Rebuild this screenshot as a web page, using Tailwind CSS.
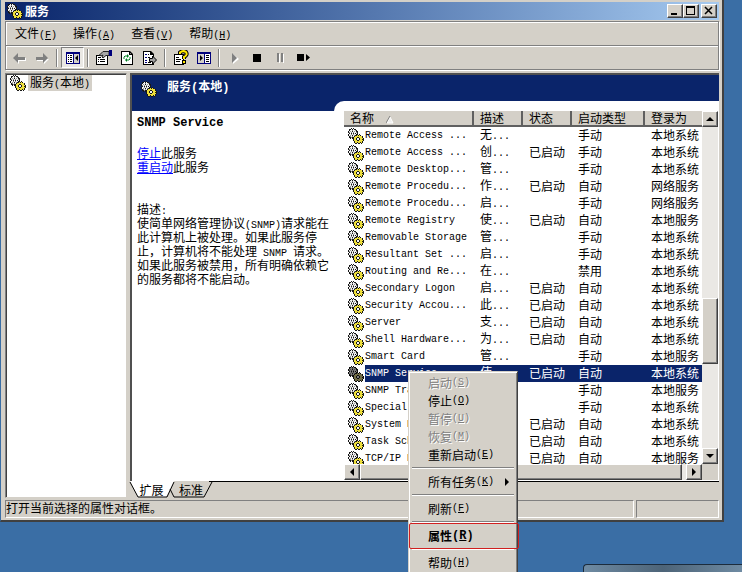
<!DOCTYPE html>
<html lang="zh-CN">
<head>
  <meta charset="UTF-8">
  <meta name="viewport" content="width=device-width, initial-scale=1.0">
  <title>服务</title>
  <script src="https://cdn.jsdelivr.net/npm/@tailwindcss/browser@4"></script>
</head>
<body class="h-screen overflow-hidden bg-[#3a6ea5] font-['Noto_Sans_CJK_SC',sans-serif] text-[12px] leading-[14px] text-black cursor-default select-none">

<!-- shared icons, gears is filled in by the script below -->
<svg class="hidden" xmlns="http://www.w3.org/2000/svg">
  <symbol id="gears" viewBox="0 0 16 16" shape-rendering="crispEdges"></symbol>
</svg>

<!-- services window -->
<div class="h-screen pb-[50px] pr-[18px]">
<div class="h-full flex flex-col bg-[#d4d0c8] border-l border-l-[#3a6ea5] border-r-2 border-b-2 border-r-[#404040] border-b-[#404040] pt-[2px] pl-1 pr-[3px] pb-[2px]">

  <!-- title bar -->
  <header class="h-[18px] shrink-0 flex items-center bg-linear-to-r from-[#0a246a] to-[#a6caf0] pl-[2px] pr-[2px]">
    <svg class="size-4 mr-[2px]"><use href="#gears"/></svg>
    <h1 class="flex-1 font-bold text-white">服务</h1>
    <button aria-label="最小化" class="w-4 h-[14px] bg-[#d4d0c8] border border-t-white border-l-white border-r-[#404040] border-b-[#404040] shadow-[inset_-1px_-1px_#808080]">
      <svg class="block w-[14px] h-3"><path d="M3 8h6v2h-6z"/></svg>
    </button>
    <button aria-label="最大化" class="w-4 h-[14px] bg-[#d4d0c8] border border-t-white border-l-white border-r-[#404040] border-b-[#404040] shadow-[inset_-1px_-1px_#808080]">
      <svg class="block w-[14px] h-3"><path d="M2 1h9v9h-9zM3 3v6h7v-6z" fill-rule="evenodd"/></svg>
    </button>
    <button aria-label="关闭" class="ml-[2px] w-4 h-[14px] bg-[#d4d0c8] border border-t-white border-l-white border-r-[#404040] border-b-[#404040] shadow-[inset_-1px_-1px_#808080]">
      <svg class="block w-[14px] h-3"><path d="M3 2l7 7M10 2l-7 7" stroke="#000" stroke-width="1.500"/></svg>
    </button>
  </header>

  <!-- menu bar -->
  <nav class="mt-px h-[25px] shrink-0 flex items-center gap-4 pl-[9px] border border-[#808080] shadow-[inset_1px_1px_#fff,1px_1px_#fff]">
    <button>文件<span class="font-['Liberation_Mono',monospace] text-[10px] leading-none">(<u>F</u>)</span></button>
    <button>操作<span class="font-['Liberation_Mono',monospace] text-[10px] leading-none">(<u>A</u>)</span></button>
    <button>查看<span class="font-['Liberation_Mono',monospace] text-[10px] leading-none">(<u>V</u>)</span></button>
    <button>帮助<span class="font-['Liberation_Mono',monospace] text-[10px] leading-none">(<u>H</u>)</span></button>
  </nav>

  <!-- toolbar -->
  <div class="-mt-px h-[25px] shrink-0 flex items-center pl-px border border-[#808080] shadow-[inset_1px_1px_#fff,1px_1px_#fff]">
    <button aria-label="后退" class="w-[23px] h-5 grid place-items-center">
      <svg class="size-4" viewBox="0 0 16 16"><path d="M3 9l5 5v-3h7v-3" fill="#fff"/><path d="M2 8l5-5v4h7v3h-7v3z" fill="#808080"/></svg>
    </button>
    <button aria-label="前进" class="w-[23px] h-5 grid place-items-center">
      <svg class="size-4" viewBox="0 0 16 16"><path d="M15 9l-5 5v-3h-7v-3" fill="#fff"/><path d="M14 8l-5-5v4h-7v3h7v3z" fill="#808080"/></svg>
    </button>
    <i class="mx-[3px] w-[2px] h-[18px] bg-[#808080] border-r border-white"></i>
    <button aria-label="显示/隐藏控制台树" class="w-[23px] h-[21px] grid place-items-center border border-t-[#808080] border-l-[#808080] border-r-white border-b-white bg-[#eae8e4]">
      <svg class="size-4" viewBox="0 0 16 16"><path d="M1 2h14v12h-14z" fill="#00007b"/><path d="M2 4h6v9h-6z" fill="#fff"/><path d="M9 4h5v9h-5z" fill="#d4d0c8"/><path d="M3 5h1v1h-1zM3 7h1v1h-1zM3 9h1v1h-1zM3 11h1v1h-1zM5 5h2v1h-2zM5 7h2v1h-2zM5 9h2v1h-2zM5 11h2v1h-2zM13 5v6l-3-3z"/></svg>
    </button>
    <i class="mx-[3px] w-[2px] h-[18px] bg-[#808080] border-r border-white"></i>
    <button aria-label="属性" class="w-[23px] h-5 grid place-items-center">
      <svg class="size-4" viewBox="0 0 16 16"><path d="M0 5h12v10h-12z"/><path d="M1 6h10v8h-10z" fill="#fff"/><path d="M2 9h1v1h-1zM4 9h5v1h-5zM2 11h1v1h-1zM4 11h5v1h-5zM2 7h3v1h-3z"/><path d="M3.500 5l3.500-3.500h6v4h-3l-3 2.500-1-1 1-2-2 1z" fill="#a8a8a8" stroke="#222"/><path d="M13 0h3v6h-3z" fill="#00007b"/></svg>
    </button>
    <button aria-label="刷新" class="w-[23px] h-5 grid place-items-center">
      <svg class="size-4" viewBox="0 0 16 16"><path d="M2 1h9l3 3v11h-12z"/><path d="M3 2h7v3h3v9h-10z" fill="#fff"/><path d="M11 3v1h1z" fill="#fff"/><path d="M5 9V7l1-1h2M11 7v2l-1 1h-2" fill="none" stroke="#008020"/><path d="M8 4l2 2-2 2zM8 8v4l-2-2z" fill="#008020"/></svg>
    </button>
    <button aria-label="导出列表" class="w-[23px] h-5 grid place-items-center">
      <svg class="size-4" viewBox="0 0 16 16"><path d="M1 1h8l3 3v11h-11z"/><path d="M2 2h6v3h3v9h-9z" fill="#fff"/><path d="M3 4h2v1h-2zM3 7h2v1h-2zM3 10h2v1h-2zM3 12h2v1h-2z" fill="#00007b"/><path d="M6 4h1v1h-1zM6 7h2v1h-2zM6 12h3v1h-3z"/><path d="M7.500 8.500h3V6l4 4-4 4v-2.500h-3z" fill="#a0a0a0" stroke="#000"/></svg>
    </button>
    <i class="mx-[3px] w-[2px] h-[18px] bg-[#808080] border-r border-white"></i>
    <button aria-label="帮助" class="w-[23px] h-5 grid place-items-center">
      <svg class="size-4" viewBox="0 0 16 16"><path d="M1 4h10v11h-10z"/><path d="M2 5h8v9h-8z" fill="#fff"/><path d="M3 7h3v1h-3zM3 9h5v1h-5zM3 11h4v1h-4z"/><path d="M7 4V2.500Q10 0 13 2q2 3-2 5v2" fill="none" stroke="#000" stroke-width="4"/><path d="M7 4V2.500Q10 0 13 2q2 3-2 5v2" fill="none" stroke="#ffe800" stroke-width="2"/><path d="M9 10h4v4h-4z"/><path d="M10 11h2v2h-2z" fill="#ffe800"/></svg>
    </button>
    <button aria-label="显示/隐藏操作窗格" class="w-[23px] h-5 grid place-items-center">
      <svg class="size-4" viewBox="0 0 16 16"><path d="M1 2h14v12h-14z" fill="#00007b"/><path d="M2 4h6v9h-6z" fill="#d4d0c8"/><path d="M9 4h5v9h-5z" fill="#fff"/><path d="M4 5v6l3-3zM10 5h3v1h-3zM10 7h3v1h-3zM10 9h3v1h-3zM10 11h3v1h-3z"/></svg>
    </button>
    <i class="mx-[3px] w-[2px] h-[18px] bg-[#808080] border-r border-white"></i>
    <button aria-label="启动服务" class="w-[23px] h-5 grid place-items-center">
      <svg class="size-4" viewBox="0 0 16 16"><path d="M6 4v10l6-5z" fill="#fff"/><path d="M5 3v10l5-5z" fill="#808080"/></svg>
    </button>
    <button aria-label="停止服务" class="w-[23px] h-5 grid place-items-center">
      <svg class="size-4" viewBox="0 0 16 16"><path d="M3 4h8v8h-8z"/></svg>
    </button>
    <button aria-label="暂停服务" class="w-[23px] h-5 grid place-items-center">
      <svg class="size-4" viewBox="0 0 16 16"><path d="M6 4v9h1v-9zM10 4v9h1v-9z" fill="#fff"/><path d="M4 3h2v9h-2zM8 3h2v9h-2z" fill="#808080"/></svg>
    </button>
    <button aria-label="重新启动服务" class="w-[23px] h-5 grid place-items-center">
      <svg class="size-4" viewBox="0 0 16 16"><path d="M1 4h7v7h-7zM10 4v7l4-3.500z"/></svg>
    </button>
  </div>

  <!-- console tree and details -->
  <main class="mt-[3px] flex-1 min-h-0 flex gap-[3px]">
    <section class="w-[122px] shrink-0 bg-white border border-t-[#808080] border-l-[#808080] border-r-[#d4d0c8] border-b-[#d4d0c8] shadow-[inset_1px_1px_#404040]">
      <div class="flex items-center pt-px pl-1">
        <svg class="size-4 mr-[2px]"><use href="#gears"/></svg>
        <span class="bg-[#d4d0c8] h-4 px-[2px]">服务<span class="font-['Liberation_Mono',monospace] text-[10px] leading-none">(</span>本地<span class="font-['Liberation_Mono',monospace] text-[10px] leading-none">)</span></span>
      </div>
    </section>

    <section class="flex-1 min-w-0 flex flex-col">
      <div class="flex-1 min-h-0 flex flex-col bg-white border-t-2 border-l-2 border-[#505050]">
        <div class="h-[26px] shrink-0 flex bg-[#0a246a] text-white font-bold">
          <div class="flex items-start pt-1 pl-[9px]">
            <svg class="size-4 mt-[2px] mr-[10px]"><use href="#gears"/></svg>
            <h2>服务<span class="font-['Liberation_Mono',monospace] text-[12px] leading-none">(</span>本地<span class="font-['Liberation_Mono',monospace] text-[12px] leading-none">)</span></h2>
          </div>
        </div>
        <div class="flex-1 min-h-0 flex">
          <!-- extended description -->
          <div class="w-[202px] shrink-0 border-t-[10px] border-[#0a246a] px-[5px] text-[12px]">
            <h3 class="font-['Liberation_Mono',monospace] font-bold pt-[5px]">SNMP Service</h3>
            <p class="mt-4"><a href="#stop" class="text-[#0000ff] underline">停止</a>此服务<br><a href="#restart" class="text-[#0000ff] underline">重启动</a>此服务</p>
            <p class="mt-7 whitespace-nowrap">描述<span class="font-['Liberation_Mono',monospace] text-[10px] leading-[0px]">:</span><br>
              使简单网络管理协议<span class="font-['Liberation_Mono',monospace] text-[10px] leading-[0px]">(SNMP)</span>请求能在<br>
              此计算机上被处理。如果此服务停<br>
              止，计算机将不能处理<span class="font-['Liberation_Mono',monospace] text-[10px] leading-[0px]"> SNMP </span>请求。<br>
              如果此服务被禁用，所有明确依赖它<br>
              的服务都将不能启动。</p>
          </div>

          <!-- service list -->
          <div class="flex-1 min-w-0 bg-[#0a246a]">
            <div class="h-full bg-white rounded-tl-[10px] pt-[10px] pl-[10px] pr-px flex flex-col">
              <div class="flex-1 min-h-0 flex">
                <div class="flex-1 min-w-0 overflow-hidden">
                  <table class="w-full table-fixed border-separate border-spacing-0">
                    <thead>
                      <tr class="h-4 bg-[#d4d0c8] text-left">
                        <th class="w-[130px] p-0 pl-[6px] font-normal border-r-2 border-b-2 border-[#606060] whitespace-nowrap">名称<svg class="inline-block ml-3 w-2 h-2" viewBox="0 0 8 8"><path d="M4 1L1 7h6z" fill="#eee" stroke="#fff"/><path d="M4 0L0 7" stroke="#808080"/></svg></th>
                        <th class="w-[49px] p-0 pl-[6px] font-normal border-r-2 border-b-2 border-[#606060]">描述</th>
                        <th class="w-[49px] p-0 pl-[6px] font-normal border-r-2 border-b-2 border-[#606060]">状态</th>
                        <th class="w-[73px] p-0 pl-[6px] font-normal border-r-2 border-b-2 border-[#606060]">启动类型</th>
                        <th class="p-0 pl-[6px] font-normal border-b-2 border-[#606060]">登录为</th>
                      </tr>
                    </thead>
                    <tbody id="services"></tbody>
                  </table>
                </div>
                <!-- vertical scrollbar -->
                <div class="w-4 shrink-0 flex flex-col bg-[#eae8e4]">
                  <button aria-label="向上滚动" class="h-4 grid place-items-center bg-[#d4d0c8] border border-t-white border-l-white border-r-[#404040] border-b-[#404040] shadow-[inset_-1px_-1px_#808080]"><svg class="w-2 h-1" viewBox="0 0 8 4"><path d="M0 4l4-4 4 4z"/></svg></button>
                  <div class="flex-[171]"></div>
                  <div class="h-[66px] bg-[#d4d0c8] border border-t-white border-l-white border-r-[#404040] border-b-[#404040] shadow-[inset_-1px_-1px_#808080]"></div>
                  <div class="flex-[84]"></div>
                  <button aria-label="向下滚动" class="h-4 grid place-items-center bg-[#d4d0c8] border border-t-white border-l-white border-r-[#404040] border-b-[#404040] shadow-[inset_-1px_-1px_#808080]"><svg class="w-2 h-1" viewBox="0 0 8 4"><path d="M0 0l4 4 4-4z"/></svg></button>
                </div>
              </div>
              <!-- horizontal scrollbar -->
              <div class="h-4 shrink-0 flex pr-4 bg-[#d4d0c8]">
                <button aria-label="向左滚动" class="w-4 grid place-items-center bg-[#d4d0c8] border border-t-white border-l-white border-r-[#404040] border-b-[#404040] shadow-[inset_-1px_-1px_#808080]"><svg class="w-1 h-2" viewBox="0 0 4 8"><path d="M4 0v8l-4-4z"/></svg></button>
                <div class="flex-1 bg-[#d4d0c8] border border-t-white border-l-white border-r-[#404040] border-b-[#404040] shadow-[inset_-1px_-1px_#808080]"></div>
                <div class="w-1 bg-[#eae8e4]"></div>
                <button aria-label="向右滚动" class="w-4 grid place-items-center bg-[#d4d0c8] border border-t-white border-l-white border-r-[#404040] border-b-[#404040] shadow-[inset_-1px_-1px_#808080]"><svg class="w-1 h-2" viewBox="0 0 4 8"><path d="M0 0v8l4-4z"/></svg></button>
              </div>
              <div class="h-px shrink-0"></div>
            </div>
          </div>
        </div>
      </div>

      <!-- view tabs -->
      <div class="h-[17px] shrink-0 flex">
        <button class="relative w-[43px] h-[17px] text-center">
          <svg class="absolute inset-0 w-[45px] h-[17px] overflow-visible"><path d="M0 0l8 16h28l8-16z" fill="#fff"/><path d="M0 1l8 15h29l7-15" fill="none" stroke="#000"/></svg>
          <span class="relative">扩展</span>
        </button>
        <button class="relative w-9 h-[17px] text-center">
          <svg class="absolute inset-0 w-9 h-[17px] overflow-visible"><path d="M-3 8l4 8h30l8-15" fill="none" stroke="#000"/></svg>
          <span class="relative">标准</span>
        </button>
        <div class="flex-1 border-t border-black"></div>
      </div>
    </section>
  </main>

  <!-- status bar -->
  <footer class="mt-[2px] h-[18px] shrink-0 flex gap-[2px]">
    <p class="flex-1 min-w-0 border border-t-[#808080] border-l-[#808080] border-r-white border-b-white">打开当前选择的属性对话框。</p>
    <p class="w-[83px] border border-t-[#808080] border-l-[#808080] border-r-white border-b-white"></p>
  </footer>
</div>
</div>

<!-- context menu -->
<div class="absolute left-[408px] top-[371px] w-[110px] pt-[2px] pb-1 bg-[#d4d0c8] border border-t-[#d4d0c8] border-l-[#d4d0c8] border-r-[#404040] border-b-[#404040] shadow-[inset_1px_1px_#fff,inset_-1px_-1px_#808080]">
  <button disabled class="w-full h-[18px] flex items-center pl-[19px] text-[#808080] [text-shadow:1px_1px_#fff]">启动<span class="font-['Liberation_Mono',monospace] text-[10px]">(<u>S</u>)</span></button>
  <button class="w-full h-[18px] flex items-center pl-[19px]">停止<span class="font-['Liberation_Mono',monospace] text-[10px]">(<u>O</u>)</span></button>
  <button disabled class="w-full h-[18px] flex items-center pl-[19px] text-[#808080] [text-shadow:1px_1px_#fff]">暂停<span class="font-['Liberation_Mono',monospace] text-[10px]">(<u>U</u>)</span></button>
  <button disabled class="w-full h-[18px] flex items-center pl-[19px] text-[#808080] [text-shadow:1px_1px_#fff]">恢复<span class="font-['Liberation_Mono',monospace] text-[10px]">(<u>M</u>)</span></button>
  <button class="w-full h-[18px] flex items-center pl-[19px]">重新启动<span class="font-['Liberation_Mono',monospace] text-[10px]">(<u>E</u>)</span></button>
  <hr class="mx-[3px] my-[3px] h-[3px] border-t border-t-[#808080] bg-linear-to-b from-white from-50% to-transparent to-50%">
  <button class="w-full h-[18px] flex items-center pl-[19px]">所有任务<span class="font-['Liberation_Mono',monospace] text-[10px]">(<u>K</u>)</span><svg class="ml-auto mr-2 w-1 h-2" viewBox="0 0 4 8"><path d="M0 0v8l4-4z"/></svg></button>
  <hr class="mx-[3px] my-[3px] h-[3px] border-t border-t-[#808080] bg-linear-to-b from-white from-50% to-transparent to-50%">
  <button class="w-full h-[18px] flex items-center pl-[19px]">刷新<span class="font-['Liberation_Mono',monospace] text-[10px]">(<u>F</u>)</span></button>
  <hr class="mx-[3px] my-[3px] h-[3px] border-t border-t-[#808080] bg-linear-to-b from-white from-50% to-transparent to-50%">
  <button class="relative w-full h-[18px] flex items-center pl-[19px] font-bold">属性<span class="font-['Liberation_Mono',monospace] text-[12px]">(<u>R</u>)</span><i class="absolute left-0 -right-[2px] -inset-y-1 border border-[#d02020] rounded-xs"></i></button>
  <hr class="mx-[3px] my-[3px] h-[3px] border-t border-t-[#808080] bg-linear-to-b from-white from-50% to-transparent to-50%">
  <button class="w-full h-[18px] flex items-center pl-[19px]">帮助<span class="font-['Liberation_Mono',monospace] text-[10px]">(<u>H</u>)</span></button>
</div>

<!-- top edge of the window below -->
<div class="absolute left-[583px] right-0 bottom-0 h-2 bg-linear-to-r from-[#6f8ba3] via-[#4d6478] to-[#6f8ba3] border-t border-l border-[#1c2c3c] rounded-tl-sm"></div>

<script>
// 16x16 gears icon, one letter per pixel
const gears = [
  '...k.k..........',
  '.kkwkwkk........',
  '.kwwgwwgk.......',
  'kwgwkwgwkk......',
  'kgwgwgwwgk......',
  '.kwkwkwkwk......',
  'kwwgwgwwkk.k....',
  'kwgwkwgkkykyk...',
  '.kgwgwkyyyyyyyk.',
  '.kkgkkyyykkyyyk.',
  '..k.kkyykwwkyyyk',
  '.....kyykwwkyykk',
  '.....kyyykkyyyyk',
  '......kyyyyyyyk.',
  '......kyykyykyk.',
  '.......kk.kk.k..',
];
const colors = { k: '#181818', w: '#f4f4f4', g: '#909090', y: '#eedf3c' };
document.getElementById('gears').innerHTML = gears
  .map((line, y) => [...line]
    .map((c, x) => colors[c] ? `<rect x="${x}" y="${y}" width="1" height="1" fill="${colors[c]}"/>` : '')
    .join(''))
  .join('');

// name, description, status, startup type, log on as
const services = [
  ['Remote Access ...', '无', '', '手动', '本地系统'],
  ['Remote Access ...', '创', '已启动', '手动', '本地系统'],
  ['Remote Desktop...', '管', '', '手动', '本地系统'],
  ['Remote Procedu...', '作', '已启动', '自动', '网络服务'],
  ['Remote Procedu...', '启', '', '手动', '网络服务'],
  ['Remote Registry', '使', '已启动', '自动', '本地服务'],
  ['Removable Storage', '管', '', '手动', '本地系统'],
  ['Resultant Set ...', '启', '', '手动', '本地系统'],
  ['Routing and Re...', '在', '', '禁用', '本地系统'],
  ['Secondary Logon', '启', '已启动', '自动', '本地系统'],
  ['Security Accou...', '此', '已启动', '自动', '本地系统'],
  ['Server', '支', '已启动', '自动', '本地系统'],
  ['Shell Hardware...', '为', '已启动', '自动', '本地系统'],
  ['Smart Card', '管', '', '手动', '本地服务'],
  ['SNMP Service', '使', '已启动', '自动', '本地系统'],
  ['SNMP Trap Service', '接', '', '手动', '本地服务'],
  ['Special Admini...', '允', '', '手动', '本地系统'],
  ['System Event N...', '监', '已启动', '自动', '本地系统'],
  ['Task Scheduler', '使', '已启动', '自动', '本地系统'],
  ['TCP/IP NetBIOS...', '提', '已启动', '自动', '本地服务'],
];
const selected = 'SNMP Service';

document.getElementById('services').innerHTML = services
  .map(([name, desc, status, type, logon]) => {
    const on = name === selected;
    const cell = on ? 'p-0 pl-[6px] pb-[2px] bg-[#0a246a] text-white' : 'p-0 pl-[6px] pb-[2px]';
    return `
      <tr class="h-[17px] whitespace-nowrap">
        <td class="p-0 pl-1">
          <div class="flex items-center h-[17px]">
            <span class="relative size-4 shrink-0 mr-px">
              <svg class="${on ? 'block size-4 saturate-50 brightness-50' : 'block size-4'}"><use href="#gears"/></svg>
            </span>
            <span class="${on ? "flex-1 h-[17px] leading-[17px] bg-[#0a246a] text-white font-['Liberation_Mono',monospace] text-[10px]" : "font-['Liberation_Mono',monospace] text-[10px]"}">${name}</span>
          </div>
        </td>
        <td class="${cell}">${desc}<span class="font-['Liberation_Mono',monospace] text-[10px] leading-none">...</span></td>
        <td class="${cell}">${status}</td>
        <td class="${cell}">${type}</td>
        <td class="${cell}">${logon}</td>
      </tr>
    `;
  })
  .join('');
</script>
</body>
</html>
